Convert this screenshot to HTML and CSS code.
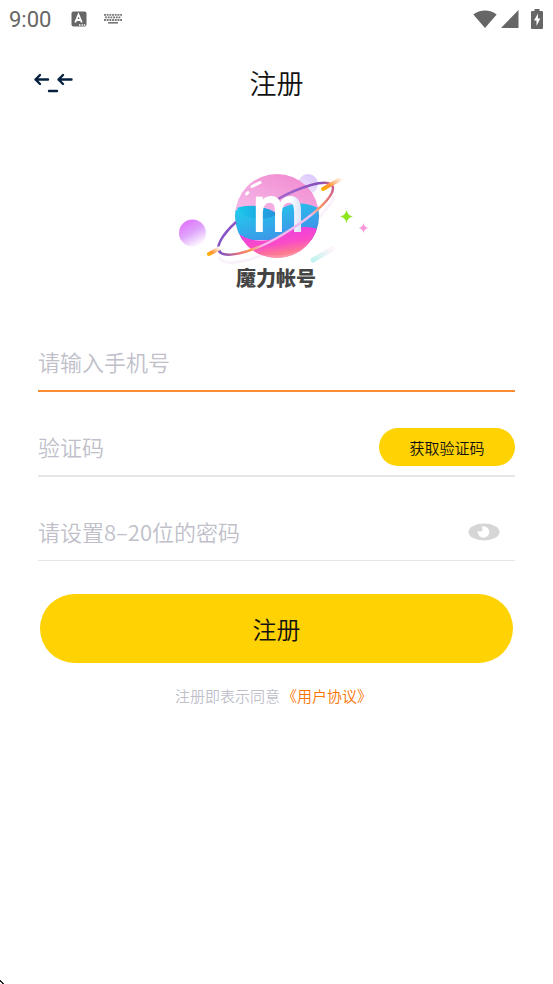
FILE: index.html
```html
<!DOCTYPE html>
<html lang="zh-CN">
<head>
    <meta charset="UTF-8">
    <meta name="viewport" content="width=device-width, initial-scale=1.0">
    <title>注册</title>
    <link rel="stylesheet" href="styles.css">
</head>
<body>
    <!-- 状态栏 -->
    <div class="status-bar">
        <span class="time">9:00</span>
        <svg class="status-input" width="16" height="16" viewBox="0 0 16 16">
            <rect x="0.5" y="0.5" width="15" height="15" rx="2" fill="#666"/>
            <path d="M4.2 11.5L7.5 3.5L10.8 11.5M5.4 9H9.6" fill="none" stroke="#fff" stroke-width="1.8"/>
            <path d="M8 14h1.4M10.4 14h1.4M12.8 14h1.4" stroke="#fff" stroke-width="1.3"/>
        </svg>
        <svg class="status-keyboard" width="20" height="12" viewBox="0 0 20 12">
            <path d="M1 1.8H19M2 4.4H18M1 7H19" stroke="#777" stroke-width="1.8" stroke-dasharray="1.9 0.8"/>
            <path d="M5 9.8H15" stroke="#777" stroke-width="1.6"/>
        </svg>
        <div class="status-right">
            <svg width="24" height="18" viewBox="0 0 24 18">
                <path d="M0.3 4.5C7-1 17-1 23.7 4.5L12 18Z" fill="#666"/>
            </svg>
            <svg width="18" height="18" viewBox="0 0 18 18">
                <path d="M17.5 0V18H0Z" fill="#666"/>
            </svg>
            <svg class="battery" width="12" height="20" viewBox="0 0 12 20">
                <path d="M1 2H3.5V0H8.5V2H11Q12 2 12 3V19Q12 20 11 20H1Q0 20 0 19V3Q0 2 1 2Z" fill="#666"/>
                <path d="M7 4.5L3 11.5H5.5V17L9.3 9.5H7Z" fill="#fff"/>
            </svg>
        </div>
    </div>

    <!-- 标题栏 -->
    <header class="header">
        <button type="button" class="back" aria-label="返回">
            <svg width="40" height="24" viewBox="0 0 40 24" fill="none" stroke="#06213f" stroke-width="2.4" stroke-linecap="round" stroke-linejoin="round">
                <path d="M15 8.500H2.500M7 4L2.500 8.500L7 13"/>
                <path d="M38.500 8.500H25.500M30 4L25.500 8.500L30 13"/>
                <path d="M16 20H24"/>
            </svg>
        </button>
        <h1 class="title">注册</h1>
    </header>

    <!-- 图标 -->
    <div class="logo">
        <svg width="210" height="135" viewBox="170 160 210 135">
            <defs>
                <linearGradient id="planet" x1="0.2" y1="1" x2="0.6" y2="0">
                    <stop offset="0" stop-color="#f09af2"/>
                    <stop offset="0.5" stop-color="#f5b5e6"/>
                    <stop offset="1" stop-color="#f28fd3"/>
                </linearGradient>
                <linearGradient id="sea" x1="0" y1="0" x2="0.7" y2="1">
                    <stop offset="0" stop-color="#1bd5ec"/>
                    <stop offset="1" stop-color="#438ce8"/>
                </linearGradient>
                <linearGradient id="wave" x1="0" y1="0" x2="1" y2="0">
                    <stop offset="0" stop-color="#19c7ea"/>
                    <stop offset="1" stop-color="#2690dc"/>
                </linearGradient>
                <linearGradient id="land" x1="0.3" y1="0" x2="0.7" y2="1">
                    <stop offset="0" stop-color="#e83be8"/>
                    <stop offset="0.5" stop-color="#fa4bc8"/>
                    <stop offset="1" stop-color="#ffa066"/>
                </linearGradient>
                <linearGradient id="moon" x1="0.2" y1="0.1" x2="0.7" y2="1">
                    <stop offset="0" stop-color="#e077fa"/>
                    <stop offset="0.45" stop-color="#dfa4fb"/>
                    <stop offset="1" stop-color="#fff"/>
                </linearGradient>
                <linearGradient id="far-moon" x1="0.8" y1="0" x2="0.2" y2="1">
                    <stop offset="0" stop-color="#d9c6fa"/>
                    <stop offset="1" stop-color="#f4e9fc"/>
                </linearGradient>
                <linearGradient id="ring" gradientUnits="userSpaceOnUse" x1="218" y1="220" x2="334" y2="220">
                    <stop offset="0" stop-color="#8450c4"/>
                    <stop offset="0.55" stop-color="#a465cd"/>
                    <stop offset="0.88" stop-color="#824dbb"/>
                    <stop offset="1" stop-color="#ed766c"/>
                </linearGradient>
                <linearGradient id="ring-front" gradientUnits="userSpaceOnUse" x1="218" y1="250" x2="334" y2="190">
                    <stop offset="0" stop-color="#7751c5"/>
                    <stop offset="0.12" stop-color="#e36e80"/>
                    <stop offset="0.22" stop-color="#ff9a50"/>
                    <stop offset="0.32" stop-color="#f4b5ea"/>
                    <stop offset="0.75" stop-color="#efbdf0"/>
                    <stop offset="0.84" stop-color="#f9975f"/>
                    <stop offset="1" stop-color="#ce5b8d"/>
                </linearGradient>
                <linearGradient id="comet" x1="0" y1="1" x2="1" y2="0">
                    <stop offset="0" stop-color="#ffb000"/>
                    <stop offset="0.3" stop-color="#ff9233"/>
                    <stop offset="1" stop-color="#fff"/>
                </linearGradient>
                <linearGradient id="comet-blue" x1="0" y1="1" x2="1" y2="0">
                    <stop offset="0" stop-color="#c2f2ef"/>
                    <stop offset="1" stop-color="#fff4fa"/>
                </linearGradient>
                <linearGradient id="letter" x1="0" y1="0" x2="1" y2="0">
                    <stop offset="0" stop-color="#fff"/>
                    <stop offset="0.7" stop-color="#fff"/>
                    <stop offset="1" stop-color="#d3defa"/>
                </linearGradient>
                <clipPath id="globe"><circle cx="277" cy="216" r="42"/></clipPath>
            </defs>
            <circle cx="192.500" cy="233" r="13.500" fill="url(#moon)"/>
            <circle cx="308" cy="184" r="10" fill="url(#far-moon)"/>
            <path d="M219 257C224 268 252 262 282 245S332 206 334 196" fill="none" stroke="#fbf1fa" stroke-width="3"/>
            <circle cx="277" cy="216" r="42" fill="url(#planet)"/>
            <g clip-path="url(#globe)">
                <path d="M234 211C248 205 262 207 275 213C286 204 302 199 320 209V240H234Z" fill="url(#sea)"/>
                <path d="M237 208C250 203 268 207 278 214C266 221 246 222 237 208Z" fill="url(#wave)"/>
                <path d="M234 231C252 243 266 244 281 235C296 226 309 225 320 230V260H234Z" fill="url(#land)"/>
                <path d="M236 248Q252 258 277 257T308 244" fill="none" stroke="#fda6df" stroke-width="3" opacity="0.4"/>
            </g>
            <path d="M252 186.500L260 182.500" stroke="#fff" stroke-width="3" stroke-linecap="round"/>
            <path d="M246.500 194L248 192.500" stroke="#fff" stroke-width="3" stroke-linecap="round"/>
            <path d="M236 222C222 235 215 247 220 252" fill="none" stroke="url(#ring)" stroke-width="2.500"/>
            <path d="M276 200C301 186 326 179 332 185" fill="none" stroke="url(#ring)" stroke-width="2.500"/>
            <text class="logo-letter" x="252" y="231" fill="url(#letter)" stroke="url(#letter)">m</text>
            <path d="M219 249C219 260 249 255 282 235S338 194 332 185" fill="none" stroke="url(#ring-front)" stroke-width="2.500"/>
            <path d="M209 254L220 248" stroke="url(#comet)" stroke-width="4" stroke-linecap="round"/>
            <path d="M323 189L342 178" stroke="url(#comet)" stroke-width="4" stroke-linecap="round"/>
            <path d="M313 260L332 249" stroke="url(#comet-blue)" stroke-width="5" stroke-linecap="round"/>
            <path d="M346.500 210Q347.500 215.500 353 216.500Q347.500 217.500 346.500 223Q345.500 217.500 340 216.500Q345.500 215.500 346.500 210Z" fill="#8de51c"/>
            <path d="M363.500 223Q364.300 227.200 368.500 228Q364.300 228.800 363.500 233Q362.700 228.800 358.500 228Q362.700 227.200 363.500 223Z" fill="#fb98dc"/>
            <text class="logo-name" x="236" y="286">魔力帐号</text>
        </svg>
    </div>

    <!-- 注册表单 -->
    <form class="form">
        <div class="field field-active">
            <input type="tel" placeholder="请输入手机号" aria-label="手机号">
        </div>
        <div class="field">
            <input type="text" placeholder="验证码" aria-label="验证码">
            <button type="button" class="code-btn">获取验证码</button>
        </div>
        <div class="field field-last">
            <input type="password" placeholder="请设置8–20位的密码" aria-label="密码">
            <button type="button" class="eye" aria-label="显示密码">
                <svg width="32" height="18" viewBox="0 0 32 18">
                    <ellipse cx="16" cy="9" rx="15.500" ry="8.500" fill="#d6d6d6"/>
                    <circle cx="15.500" cy="9" r="5.800" fill="#fff"/>
                    <circle cx="12" cy="6" r="2.500" fill="#d6d6d6"/>
                </svg>
            </button>
        </div>
        <button type="submit" class="submit">注册</button>
    </form>

    <p class="agreement">注册即表示同意<a href="#">《用户协议》</a></p>

    <svg class="pointer" width="4" height="4" viewBox="0 0 4 4">
        <path d="M0 0h1v1h1v1h1v1h1v1h-2v-1h-1v-1h-1z" fill="#222"/>
    </svg>
</body>
</html>
```
FILE: styles.css
```css
body {
    position: relative;
    box-sizing: border-box;
    min-height: 100vh;
    margin: 0;
    background: #fff;
    color: #111;
    font-family: "Noto Sans CJK SC", sans-serif;
    font-weight: 350;
}

svg {
    display: block;
}

button {
    padding: 0;
    border: none;
    background: none;
    color: #111;
    font-family: inherit;
    font-weight: 350;
    cursor: pointer;
}

/* 状态栏 */
.status-bar {
    display: flex;
    align-items: center;
    height: 38px;
    padding: 0 10px 0 9px;
}

.time {
    color: #666;
    font-family: Roboto, sans-serif;
    font-size: 22px;
    font-weight: 400;
}

.status-input {
    margin-left: 20px;
}

.status-keyboard {
    margin-left: 16px;
}

.status-right {
    display: flex;
    align-items: center;
    gap: 4px;
    margin-left: auto;
}

.battery {
    margin-left: 8px;
}

/* 标题栏 */
.header {
    display: grid;
    grid-template-columns: 40px 1fr 40px;
    align-items: center;
    height: 90px;
    padding: 0 33px;
}

.title {
    margin: 0;
    font-size: 27px;
    font-weight: 350;
    line-height: 40px;
    text-align: center;
}

/* 图标 */
.logo {
    display: flex;
    justify-content: center;
    padding: 32px 4px 0 0;
}

.logo-letter {
    font-family: "DejaVu Sans Condensed", "DejaVu Sans", sans-serif;
    font-size: 60px;
    font-weight: 400;
    stroke-width: 2px;
}

.logo-name {
    fill: #444;
    font-size: 20px;
    font-weight: 900;
}

/* 表单 */
.form {
    padding: 39px 38px 0;
}

.field {
    display: flex;
    align-items: center;
    height: 56px;
    margin-top: 27px;
    border-bottom: 2px solid #e6e6e6;
}

.field:first-child {
    margin-top: 0;
}

.field-active {
    border-bottom-color: #fa8c32;
}

.field-last {
    border-bottom-width: 1px;
}

.field input {
    flex: 1;
    min-width: 0;
    height: 38px;
    padding: 0 0 2px;
    border: none;
    outline: none;
    background: none;
    color: #111;
    font-family: inherit;
    font-size: 22px;
    font-weight: 350;
}

.field input::placeholder {
    color: #c0bfca;
}

.code-btn {
    width: 136px;
    height: 38px;
    border-radius: 19px;
    background: #ffd204;
    font-size: 15px;
}

.eye {
    margin-right: 15px;
}

.submit {
    display: block;
    width: calc(100% - 4px);
    height: 69px;
    margin: 33px auto 0;
    border-radius: 35px;
    background: #ffd204;
    font-size: 24px;
}

.agreement {
    margin: 22px 0 0;
    padding-right: 6px;
    color: #c0bfca;
    font-size: 15px;
    line-height: 22px;
    text-align: center;
}

.agreement a {
    margin-left: 2px;
    color: #f97400;
    text-decoration: none;
}

.pointer {
    position: absolute;
    bottom: 0;
    left: 0;
}
```
